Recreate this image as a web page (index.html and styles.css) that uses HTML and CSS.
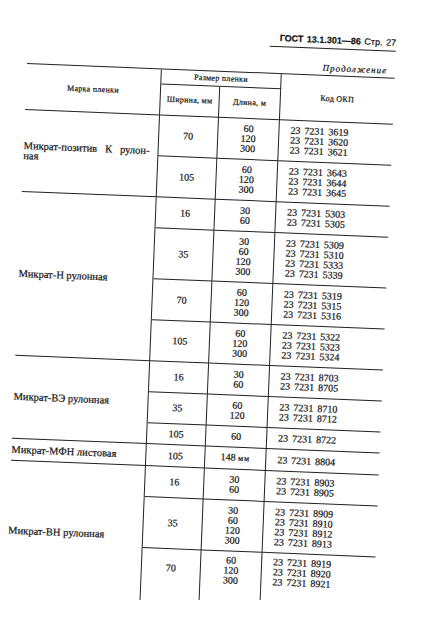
FILE: index.html
```html
<!DOCTYPE html>
<html lang="ru">
<head>
<meta charset="utf-8">
<title>ГОСТ 13.1.301—86 Стр. 27</title>
<link rel="stylesheet" href="styles.css">
</head>
<body>
<div class="page">
  <div class="doc-head"><b>ГОСТ 13.1.301—86</b> Стр. 27</div>
  <div class="cont">Продолжение</div>
  <table class="spec">
    <colgroup>
      <col class="c-brand"><col class="c-width"><col class="c-len"><col class="c-code">
    </colgroup>
    <thead>
      <tr class="hr1">
        <th rowspan="2" class="h-brand">Марка пленки</th>
        <th colspan="2" class="h-size">Размер пленки</th>
        <th rowspan="2" class="h-code">Код ОКП</th>
      </tr>
      <tr class="hr2">
        <th>Ширина, мм</th>
        <th>Длина, м</th>
      </tr>
    </thead>
    <tbody>
      <tr>
        <td rowspan="2" class="brand"><span class="just">Микрат-позитив К рулон-</span>ная</td>
        <td class="w">70</td><td class="l">60<br>120<br>300</td>
        <td class="k">23 7231 3619<br>23 7231 3620<br>23 7231 3621</td>
      </tr>
      <tr>
        <td class="w">105</td><td class="l">60<br>120<br>300</td>
        <td class="k">23 7231 3643<br>23 7231 3644<br>23 7231 3645</td>
      </tr>

      <tr>
        <td rowspan="4" class="brand">Микрат-Н рулонная</td>
        <td class="w">16</td><td class="l">30<br>60</td>
        <td class="k">23 7231 5303<br>23 7231 5305</td>
      </tr>
      <tr>
        <td class="w">35</td><td class="l">30<br>60<br>120<br>300</td>
        <td class="k">23 7231 5309<br>23 7231 5310<br>23 7231 5333<br>23 7231 5339</td>
      </tr>
      <tr>
        <td class="w">70</td><td class="l">60<br>120<br>300</td>
        <td class="k">23 7231 5319<br>23 7231 5315<br>23 7231 5316</td>
      </tr>
      <tr>
        <td class="w">105</td><td class="l">60<br>120<br>300</td>
        <td class="k">23 7231 5322<br>23 7231 5323<br>23 7231 5324</td>
      </tr>

      <tr>
        <td rowspan="3" class="brand">Микрат-ВЭ рулонная</td>
        <td class="w">16</td><td class="l">30<br>60</td>
        <td class="k">23 7231 8703<br>23 7231 8705</td>
      </tr>
      <tr>
        <td class="w">35</td><td class="l">60<br>120</td>
        <td class="k">23 7231 8710<br>23 7231 8712</td>
      </tr>
      <tr>
        <td class="w">105</td><td class="l">60</td>
        <td class="k">23 7231 8722</td>
      </tr>

      <tr>
        <td class="brand">Микрат-МФН листовая</td>
        <td class="w">105</td><td class="l">148 <span class="unit">мм</span></td>
        <td class="k">23 7231 8804</td>
      </tr>

      <tr>
        <td rowspan="4" class="brand open">Микрат-ВН рулонная</td>
        <td class="w">16</td><td class="l">30<br>60</td>
        <td class="k">23 7231 8903<br>23 7231 8905</td>
      </tr>
      <tr>
        <td class="w">35</td><td class="l">30<br>60<br>120<br>300</td>
        <td class="k">23 7231 8909<br>23 7231 8910<br>23 7231 8912<br>23 7231 8913</td>
      </tr>
      <tr class="last">
        <td class="w">70</td><td class="l">60<br>120<br>300</td>
        <td class="k">23 7231 8919<br>23 7231 8920<br>23 7231 8921</td>
      </tr>
      <tr class="tail">
        <td class="w"></td><td class="l"></td><td class="k"></td>
      </tr>
    </tbody>
  </table>
</div>
</body>
</html>
```

FILE: styles.css
```css
html, body {
  margin: 0;
  background: #ffffff;
}

body {
  color: #111111;
  font-family: "Liberation Serif", "DejaVu Serif", serif;
  -webkit-text-stroke: 0.2px #111111;
}

.page {
  width: 368px;
  padding: 22px 0 0 27px;
  transform: rotate(2.3deg);
  transform-origin: 27px 63px;
}

.doc-head {
  margin-left: 242px;
  padding-bottom: 2px;
  border-bottom: 1px solid #222;
  font-family: "Liberation Sans", "DejaVu Sans", sans-serif;
  font-size: 9px;
  line-height: 12px;
  text-align: right;
  word-spacing: 1px;
}

.doc-head b {
  font-weight: bold;
}

.cont {
  margin: 13px 0 1px;
  padding-right: 8px;
  font-style: italic;
  font-size: 9px;
  line-height: 12px;
  letter-spacing: 1px;
  text-align: right;
}

.spec {
  width: 368px;
  border-collapse: separate;
  border-spacing: 0;
  table-layout: fixed;
  border-top: 1px solid #222;
}

.c-brand { width: 135px; }
.c-width { width: 59px; }
.c-len { width: 61px; }
.c-code { width: 113px; }

.spec th,
.spec td {
  padding: 0;
  border-bottom: 1px solid #222;
  border-right: 1px solid #222;
  vertical-align: middle;
}

.spec th {
  font-weight: normal;
  font-size: 8px;
  line-height: 10px;
  text-align: center;
  letter-spacing: 0.3px;
}

.spec .h-code,
.spec .k {
  border-right: none;
}

.hr1 th.h-size {
  line-height: 14px;
}

.hr2 th {
  padding: 10px 0;
}

.h-brand,
.h-code {
  font-size: 8.5px;
}

.spec td {
  font-size: 10px;
  line-height: 10px;
}

.spec td.w,
.spec td.l {
  padding: 5px 0;
  text-align: center;
}

.spec td.k {
  padding: 5px 0 5px 11px;
  word-spacing: 1.5px;
  white-space: nowrap;
}

.last td.w,
.last td.l,
.last td.k {
  padding-top: 4px;
  padding-bottom: 4px;
}

.unit {
  font-size: 8px;
  letter-spacing: 1px;
}

.spec td.brand {
  padding: 0 8px 0 0;
  font-size: 10.5px;
  line-height: 10px;
  text-align: left;
}

.just {
  display: block;
  text-align: justify;
  text-align-last: justify;
}

.spec td.open,
.last td,
.tail td {
  border-bottom: none;
}

.tail td {
  height: 9px;
  padding: 0;
}
```
